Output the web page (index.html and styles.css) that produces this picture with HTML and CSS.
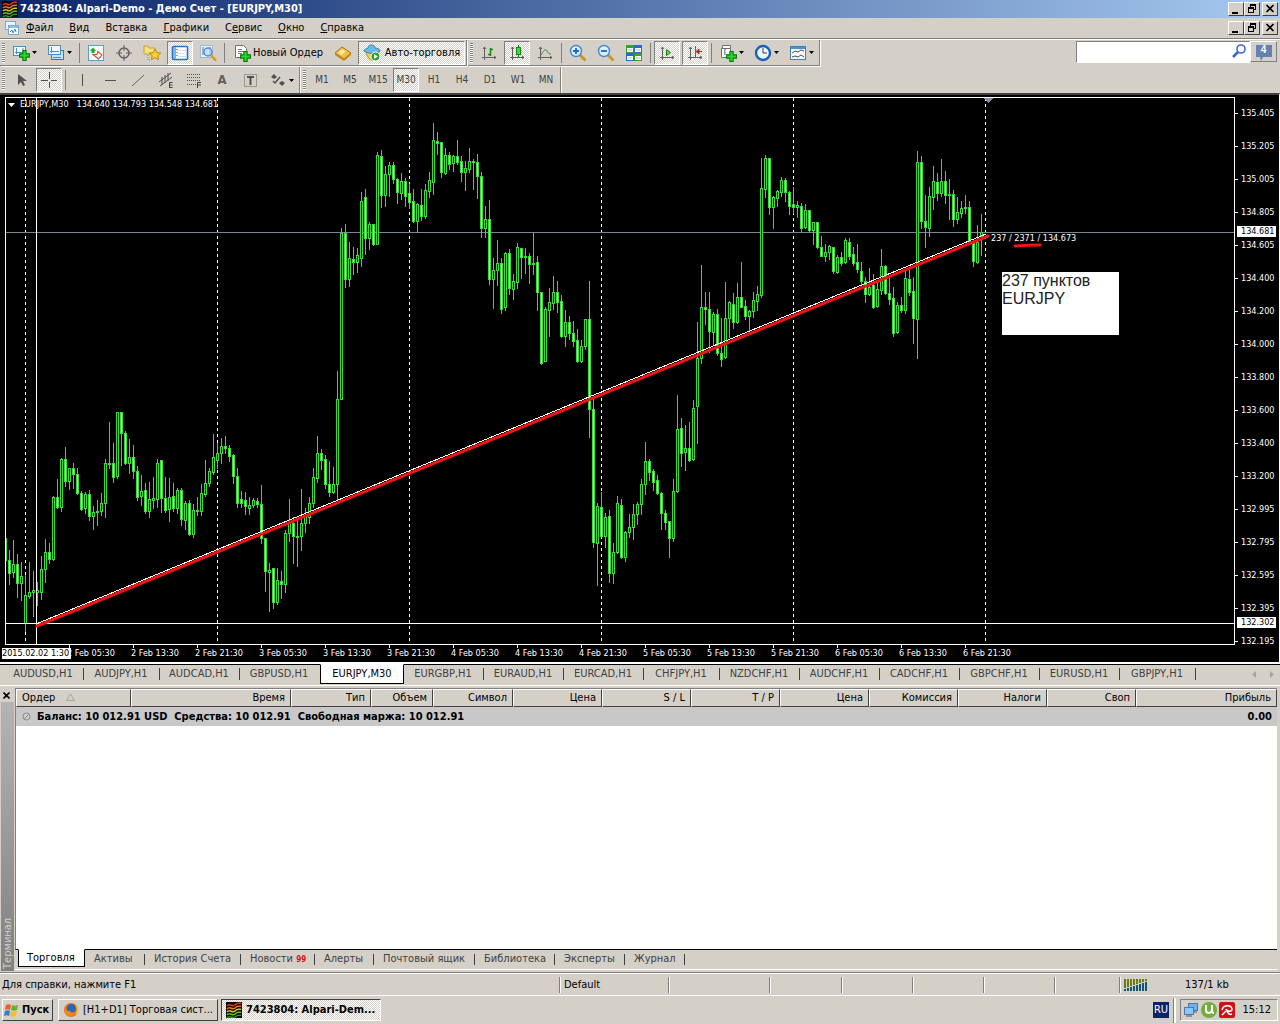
FILE: index.html
```html
<!DOCTYPE html>
<html lang="ru">
<head>
<meta charset="utf-8">
<title>7423804: Alpari-Demo - Демо Счет - [EURJPY,M30]</title>
<link rel="stylesheet" href="styles.css">
</head>
<body>
<svg class="sprite" aria-hidden="true">
  <symbol id="logo" viewBox="0 0 16 16"><rect width="16" height="16" fill="#100800"/><g fill="none" stroke-width="1.6"><path d="M1 4c3-4 5 2 8-1s4-1 6-2" stroke="#e03818"/><path d="M1 7c3-4 5 2 8-1s4-1 6-2" stroke="#e87828"/><path d="M1 10c3-4 5 2 8-1s4-1 6-2" stroke="#c8c830"/><path d="M1 13c3-4 5 2 8-1s4-1 6-2" stroke="#60c030"/><path d="M1 16c3-4 5 2 8-1s4-1 6-2" stroke="#309020"/></g></symbol>
  <symbol id="min" viewBox="0 0 12 10"><path d="M2 8h6v2H2z"/></symbol>
  <symbol id="restore" viewBox="0 0 12 10"><path d="M4 0h6v6H8v3H2V3h2zM5 2v1h3v2h1V2zM3 5v3h4V5z" fill-rule="evenodd"/></symbol>
  <symbol id="close" viewBox="0 0 12 10"><path d="M2.500 1l7 7M9.500 1l-7 7" stroke="#000" stroke-width="1.700"/></symbol>
  <symbol id="plus" viewBox="0 0 10 10"><path d="M3.500.5h3v3h3v3h-3v3h-3v-3h-3v-3h3z" fill="#28d828" stroke="#087808"/></symbol>
  <symbol id="down" viewBox="0 0 5 3"><path d="M0 0h5L2.500 3z"/></symbol>
  <symbol id="axes" viewBox="0 0 16 16"><path d="M3.500 2v13M1 12.500h14M2 4l1.500-2L5 4M13 11l2 1.500-2 1.500" fill="none" stroke="#606060"/></symbol>
</svg>

<header class="titlebar">
  <svg class="i16"><use href="#logo"/></svg>
  <h1>7423804: Alpari-Demo - Демо Счет - [EURJPY,M30]</h1>
  <div class="winbtns">
    <button aria-label="Свернуть"><svg><use href="#min"/></svg></button><button aria-label="Восстановить"><svg><use href="#restore"/></svg></button><button class="gap" aria-label="Закрыть"><svg><use href="#close"/></svg></button>
  </div>
</header>

<nav class="menubar">
  <svg class="i16" viewBox="0 0 16 16"><rect x="1.500" y="1.500" width="10" height="8" fill="#eaf4ff" stroke="#78a8d8"/><rect x="4.500" y="5.500" width="10" height="9" fill="#fff" stroke="#78a8d8"/><path d="M5 7h9" stroke="#90bce8" stroke-width="2"/><path d="M6 12l2-2 1 3 2-4 1 3" fill="none" stroke="#4888c8"/></svg>
  <button><u>Ф</u>айл</button><button><u>В</u>ид</button><button>Вст<u>а</u>вка</button><button><u>Г</u>рафики</button><button>С<u>е</u>рвис</button><button><u>О</u>кно</button><button><u>С</u>правка</button>
  <div class="winbtns">
    <button aria-label="Свернуть окно"><svg><use href="#min"/></svg></button><button aria-label="Восстановить окно"><svg><use href="#restore"/></svg></button><button class="gap" aria-label="Закрыть окно"><svg><use href="#close"/></svg></button>
  </div>
</nav>

<section class="toolbars">
  <div class="rows">
    <div class="row">
      <div class="bar">
        <i class="grip"></i>
        <button class="drop" aria-label="Новый график"><svg class="i18" viewBox="0 0 18 18"><rect x="1.500" y="2.500" width="12" height="9" fill="#eef8ff" stroke="#4890c8"/><path d="M4.500 4v6M3 8.500h9M11 4v5" stroke="#4890c8"/><use href="#plus" x="7" y="6" width="11" height="11"/></svg><svg class="arr"><use href="#down"/></svg></button>
        <button class="drop" aria-label="Профили"><svg class="i18" viewBox="0 0 18 18"><rect x="4.500" y="6.500" width="12" height="9" fill="#c8e0f8" stroke="#4078b0"/><rect x="1.500" y="1.500" width="12" height="9" fill="#eef8ff" stroke="#4890c8"/><path d="M4.500 3v6M3 7.500h9M6 13.500h8" stroke="#4890c8"/></svg><svg class="arr"><use href="#down"/></svg></button>
        <i class="sep"></i>
        <button aria-label="Обзор рынка"><svg class="i18" viewBox="0 0 18 18"><rect x="1.500" y="1.500" width="15" height="15" fill="#f4faff" stroke="#58a0d8"/><path d="M3 7l3-3.500L9 7H7.500v2h-3V7z" fill="#18b018"/><path d="M6 10.500h4l1-3 4 3.500-3.500 4z" fill="none" stroke="#e05030" stroke-width="1.200"/></svg></button>
        <button aria-label="Окно данных"><svg class="i18" viewBox="0 0 18 18"><circle cx="9" cy="9" r="5" fill="none" stroke="#606060" stroke-width="1.500"/><path d="M9 1v6M9 11v6M1 9h6M11 9h6" stroke="#606060"/></svg></button>
        <button aria-label="Избранное"><svg class="i18" viewBox="0 0 18 18"><path d="M1 2h4l1 2h6v6H1z" fill="#f8e080" stroke="#c8a030"/><path d="M5 11v5h3" stroke="#888" fill="none" stroke-dasharray="1 1"/><path d="M12 5l1.800 3.600 4 .5-3 2.600.8 4-3.600-2-3.600 2 .8-4-3-2.600 4-.5z" fill="#f8d030" stroke="#b88818"/></svg></button>
        <button class="on" aria-label="Терминал"><svg class="i18" viewBox="0 0 18 18"><rect x="1.500" y="2.500" width="15" height="13" rx="1" fill="#fff" stroke="#2870c8" stroke-width="1.600"/><path d="M2 3h3v12H2z" fill="#78b0f0"/><path d="M7 6.500h8M7 9.500h6M7 12.500h8" stroke="#d0dcf0"/><path d="M5.500 5.500h1M5.500 8.500h1M5.500 11.500h1" stroke="#303080"/></svg></button>
        <button aria-label="Тестер стратегий"><svg class="i18" viewBox="0 0 18 18"><rect x="1.500" y="1.500" width="12" height="12" fill="#e8f4ff" stroke="#98b8e0"/><path d="M4 3v8M11 3v8" stroke="#4070a0"/><circle cx="9" cy="8" r="4" fill="#b8d8f8" fill-opacity=".7" stroke="#5888c0" stroke-width="1.400"/><path d="M12 11.500l5 5" stroke="#d0a020" stroke-width="2.600"/></svg></button>
        <i class="sep"></i>
        <button class="text"><svg class="i18" viewBox="0 0 18 18"><path d="M2.500 1.500h8l3 3v9h-11z" fill="#fff" stroke="#707070"/><path d="M5 5.500h4M5 7.500h6M5 9.500h4" stroke="#808080"/><use href="#plus" x="7" y="7" width="11" height="11"/></svg>Новый Ордер</button>
        <button aria-label="MetaEditor"><svg class="i18" viewBox="0 0 18 18"><path d="M1 9l7-6 9 6-7 6z" fill="#f0c040" stroke="#a87018"/><path d="M1 9v2l9 6v-2zM17 9v2l-7 6v-2z" fill="#c88820"/><path d="M4 9l4-4 4 2-4 4z" fill="#fce898"/></svg></button>
        <button class="text on auto"><svg class="i18" viewBox="0 0 18 18"><path d="M1 7c3 0 3 9 8 9s7-5 7-9z" fill="#f0d050" stroke="#b09020"/><path d="M1 7c0-2 3-2 4-3 0-4 7-4 7 0 2 0 5 1 5 3-4 3-12 3-16 0z" fill="#68b8e8" stroke="#3880b0"/><circle cx="12.500" cy="12.500" r="4.500" fill="#20a828" stroke="#fff"/><path d="M11 10l4 2.500-4 2.500z" fill="#fff"/></svg>Авто-торговля</button>
      </div>
      <div class="bar">
        <i class="grip"></i>
        <button aria-label="Бары"><svg class="i16"><use href="#axes"/><path d="M9.500 3v8M9 4.500h3M7 9.500h2" stroke="#108810" stroke-width="1.500"/></svg></button>
        <button class="on" aria-label="Свечи"><svg class="i16"><use href="#axes"/><path d="M9.500 0v12" stroke="#108810"/><rect x="7.500" y="2.500" width="4" height="7" fill="#40d840" stroke="#108810"/></svg></button>
        <button aria-label="Линия"><svg class="i16"><use href="#axes"/><path d="M4 10c3-6 5-6 6-4s2 3 4 3" stroke="#388838" fill="none"/></svg></button>
        <i class="sep"></i>
        <button aria-label="Увеличить"><svg class="i18" viewBox="0 0 18 18"><path d="M11 11l5.500 5.500" stroke="#c89820" stroke-width="3"/><circle cx="7" cy="7" r="5.500" fill="#d8efff" stroke="#4088d0" stroke-width="1.400"/><path d="M4 7h6M7 4v6" stroke="#2068c0" stroke-width="1.800"/></svg></button>
        <button aria-label="Уменьшить"><svg class="i18" viewBox="0 0 18 18"><path d="M11 11l5.500 5.500" stroke="#c89820" stroke-width="3"/><circle cx="7" cy="7" r="5.500" fill="#d8efff" stroke="#4088d0" stroke-width="1.400"/><path d="M4 7h6" stroke="#2068c0" stroke-width="1.800"/></svg></button>
        <button aria-label="Окна плиткой"><svg class="i18" viewBox="0 0 18 18"><path d="M1 1h8v8H1zM9 9h8v8H9z" fill="#38a028"/><path d="M9 1h8v8H9zM1 9h8v8H1z" fill="#2868d0"/><path d="M2 4h6v4H2zM10 4h6v4h-6zM2 12h6v4H2zM10 12h6v4h-6z" fill="#fff"/><path d="M3 6h4M11 6h4M3 14h4M11 14h4" stroke="#a0c0d8"/></svg></button>
        <i class="sep"></i>
        <button class="on" aria-label="Автопрокрутка"><svg class="i16"><use href="#axes"/><path d="M7.500 4.500v6l4-3z" fill="#60d860" stroke="#108810"/></svg></button>
        <button class="on" aria-label="Сдвиг графика"><svg class="i16"><use href="#axes"/><path d="M8.500 1v11" stroke="#606060"/><path d="M15 6.500h-5M12 4l-3 2.500L12 9z" stroke="#b03020" fill="#b03020"/></svg></button>
        <i class="sep"></i>
        <button class="drop" aria-label="Индикаторы"><svg class="i18" viewBox="0 0 18 18"><path d="M3.500 4.500v-3h8v3M2.500 4.500h9v9h-9z" fill="#fff" stroke="#707070"/><path d="M7 5c-2 0-1 3-1 6" stroke="#505050" fill="none"/><use href="#plus" x="7" y="7" width="11" height="11"/></svg><svg class="arr"><use href="#down"/></svg></button>
        <button class="drop" aria-label="Периоды"><svg class="i18" viewBox="0 0 18 18"><circle cx="9" cy="9" r="7" fill="#e8f4ff" stroke="#1860b8" stroke-width="2.400"/><path d="M9 4v5h4" stroke="#404040" fill="none"/></svg><svg class="arr"><use href="#down"/></svg></button>
        <button class="drop" aria-label="Шаблоны"><svg class="i18" viewBox="0 0 18 18"><rect x="1.500" y="2.500" width="15" height="13" fill="#f4faff" stroke="#4080b8"/><path d="M2 4h14" stroke="#4890d8" stroke-width="2"/><path d="M3 9l3-2 3 1 3-2 3 1M3 13l3-1 3 1 3-2 3 2" stroke="#505050" fill="none"/></svg><svg class="arr"><use href="#down"/></svg></button>
      </div>
    </div>
    <div class="row">
      <div class="bar">
        <i class="grip"></i>
        <button aria-label="Курсор"><svg class="i16"><path d="M5 2v11l3-3 2 4 2-1-2-4h4z" fill="#505050"/></svg></button>
        <button class="on" aria-label="Перекрестие"><svg class="i16"><path d="M8.500 0v7M8.500 10v6M0 8.500h7M10 8.500h6" stroke="#505050"/></svg></button>
        <i class="sep"></i>
        <button aria-label="Вертикальная линия"><svg class="i16"><path d="M8.500 2v12" stroke="#505050"/></svg></button>
        <button aria-label="Горизонтальная линия"><svg class="i16"><path d="M3 8.500h11" stroke="#505050"/></svg></button>
        <button aria-label="Трендовая линия"><svg class="i16"><path d="M2 14L14 3" stroke="#606060"/></svg></button>
        <button aria-label="Канал"><svg class="i16"><path d="M1 10L13 1M2 14L14 5M4 5v8M7 3v8M10 1v8" stroke="#505050"/><path d="M14.500 10.500h-3v5h3M11.500 13h3" stroke="#404040" fill="none"/></svg></button>
        <button aria-label="Фибоначчи"><svg class="i16"><path d="M1 2.500h14M1 5.500h14M1 8.500h14M1 12.500h9" stroke="#505050" stroke-dasharray="1 1"/><path d="M15 10.500h-3.500V16M12 13h3" stroke="#404040" fill="none"/></svg></button>
        <button class="letter">A</button>
        <button aria-label="Текстовая метка"><svg class="i16"><rect x="2.500" y="2.500" width="12" height="12" fill="none" stroke="#606060" stroke-dasharray="1 1"/><path d="M5 5h7M8.500 5v8" stroke="#505050" stroke-width="2"/></svg></button>
        <button class="drop" aria-label="Стрелки"><svg class="i18" viewBox="0 0 18 18"><path d="M2 6l3-3 3 3-3 2zM10 12l3-2 3 2-3 3z" fill="#505050"/><path d="M4 10l2 2 5-6" stroke="#505050" fill="none" stroke-width="1.500"/></svg><svg class="arr"><use href="#down"/></svg></button>
      </div>
      <div class="bar periods">
        <i class="grip"></i>
        <button>M1</button><button>M5</button><button>M15</button><button class="on">M30</button><button>H1</button><button>H4</button><button>D1</button><button>W1</button><button>MN</button>
      </div>
    </div>
  </div>
  <div class="search">
    <input type="search" aria-label="Поиск">
    <svg class="lens" viewBox="0 0 14 14"><circle cx="9" cy="5" r="4" fill="none" stroke="#3868c8" stroke-width="1.600"/><path d="M6 8l-5 5" stroke="#3868c8" stroke-width="2.600"/></svg>
    <button class="chat"><svg class="bubble" viewBox="0 0 16 16"><path d="M0 0h16v12H7l-2 4-1-4H0z" fill="#6480b4"/></svg><span>4</span></button>
  </div>
</section>

<main class="chart">
  <div class="plot">
    <svg id="plot" class="canvas" shape-rendering="crispEdges" role="img" aria-label="EURJPY M30"></svg>
    <p class="ohlc"><svg class="tri" viewBox="0 0 7 4"><path d="M0 0h7L3.500 4z" fill="#fff"/></svg><span>EURJPY,M30</span><span>134.640 134.793 134.548 134.681</span></p>
    <p class="measure">237 / 2371 / 134.673</p>
    <p class="note">237 пунктов<br>EURJPY</p>
  </div>
  <ol class="prices">
    <li>135.405</li><li>135.205</li><li>135.005</li><li>134.805</li><li>134.605</li><li>134.400</li><li>134.200</li><li>134.000</li><li>133.800</li><li>133.600</li><li>133.400</li><li>133.200</li><li>132.995</li><li>132.795</li><li>132.595</li><li>132.395</li><li>132.195</li>
    <li class="mark bid">134.681</li><li class="mark cursor">132.302</li>
  </ol>
  <ol class="times">
    <li>2 Feb 05:30</li><li>2 Feb 13:30</li><li>2 Feb 21:30</li><li>3 Feb 05:30</li><li>3 Feb 13:30</li><li>3 Feb 21:30</li><li>4 Feb 05:30</li><li>4 Feb 13:30</li><li>4 Feb 21:30</li><li>5 Feb 05:30</li><li>5 Feb 13:30</li><li>5 Feb 21:30</li><li>6 Feb 05:30</li><li>6 Feb 13:30</li><li>6 Feb 21:30</li>
    <li class="mark now">2015.02.02 1:30</li>
  </ol>
</main>

<nav class="charttabs">
  <button>AUDUSD,H1</button><button class="narrow">AUDJPY,H1</button><button>AUDCAD,H1</button><button class="last">GBPUSD,H1</button><button class="active">EURJPY,M30</button><button>EURGBP,H1</button><button>EURAUD,H1</button><button>EURCAD,H1</button><button class="narrow">CHFJPY,H1</button><button>NZDCHF,H1</button><button>AUDCHF,H1</button><button>CADCHF,H1</button><button>GBPCHF,H1</button><button>EURUSD,H1</button><button class="narrow">GBPJPY,H1</button>
  <svg class="scroll" viewBox="0 0 22 7"><path d="M4 0v7L0 3.500zM18 0v7l4-3.500z" fill="#a8a49c"/></svg>
</nav>

<section class="terminal">
  <aside class="side"><button aria-label="Закрыть терминал"><svg viewBox="0 0 7 7"><path d="M.5.5l6 6M6.500.5l-6 6" stroke="#000" stroke-width="1.600"/></svg></button><span>Терминал</span></aside>
  <div class="pane">
    <div class="sheet">
      <table>
        <colgroup><col class="c-order"><col class="c-time"><col class="c-type"><col class="c-vol"><col class="c-type"><col class="c-num"><col class="c-num"><col class="c-num"><col class="c-num"><col class="c-num"><col class="c-num"><col class="c-num"><col></colgroup>
        <thead><tr><th>Ордер <svg class="sort" viewBox="0 0 9 8"><path d="M4.500 1L.5 7.500h8z" fill="none" stroke="#a8a49c"/></svg></th><th>Время</th><th>Тип</th><th>Объем</th><th>Символ</th><th>Цена</th><th>S / L</th><th>T / P</th><th>Цена</th><th>Комиссия</th><th>Налоги</th><th>Своп</th><th>Прибыль</th></tr></thead>
        <tbody><tr><td colspan="12"><svg class="dot" viewBox="0 0 9 9"><circle cx="4.500" cy="4.500" r="3.500" fill="#ccc" stroke="#888"/><path d="M2.500 6.500l4-4" stroke="#888"/></svg>Баланс: 10 012.91 USD&nbsp; Средства: 10 012.91&nbsp; Свободная маржа: 10 012.91</td><td>0.00</td></tr></tbody>
      </table>
    </div>
    <nav class="termtabs"><button class="active">Торговля</button><button>Активы</button><button>История Счета</button><button>Новости <b>99</b></button><button>Алерты</button><button>Почтовый ящик</button><button>Библиотека</button><button>Эксперты</button><button>Журнал</button></nav>
  </div>
</section>

<footer class="status">
  <span>Для справки, нажмите F1</span><span>Default</span><span></span><span></span><span></span><span></span><span></span><span></span>
  <span><svg class="signal" viewBox="0 0 24 12" shape-rendering="crispEdges"><path d="M0 0h2v9H0zM3 0h2v8H3zM6 0h2v7H6zM9 0h2v6H9zM12 0h2v5h-2zM15 0h2v4h-2zM18 0h2v3h-2zM21 0h2v2h-2z" fill="#6c7c10"/><path d="M0 10h2v2H0zM3 9h2v3H3zM6 8h2v4H6zM9 7h2v5H9zM12 6h2v6h-2zM15 5h2v7h-2zM18 4h2v8h-2zM21 3h2v9h-2z" fill="#105878"/></svg></span><span class="kb">137/1 kb</span>
</footer>

<footer class="taskbar">
  <button class="start"><svg class="i16" viewBox="0 0 16 16"><path d="M2 3c2-1 3-1 5 0L6 8C4 7 3 7 1 8z" fill="#e86028"/><path d="M8 3c2 1 3 1 6 0l-1 5c-2 1-4 1-6 0z" fill="#68b030"/><path d="M1 9c2-1 3-1 5 0l-1 5c-2-1-3-1-5 0z" fill="#3878d8"/><path d="M7 9c2 1 4 1 6 0l-1 5c-2 1-4 1-6 0z" fill="#f0c028"/></svg>Пуск</button>
  <button class="task"><svg class="i16" viewBox="0 0 16 16"><circle cx="8" cy="8" r="7" fill="#e87018"/><circle cx="8.500" cy="6.500" r="4.500" fill="#2868b8"/><path d="M1 5c1 4 3 4 6 4 1 2 4 2 6 0-1 4-4 5-6 5s-6-2-6-9z" fill="#f08820"/><path d="M13 3c2 3 2 6 0 9" stroke="#f8c030" fill="none" stroke-width="1.500"/></svg><span>[H1+D1] Торговая сист...</span></button>
  <button class="task current"><svg class="i16"><use href="#logo"/></svg><span>7423804: Alpari-Dem...</span></button>
  <span class="lang">RU</span>
  <div class="tray">
    <svg class="i16" viewBox="0 0 16 16"><rect x="5.500" y="1.500" width="9" height="7" fill="#70b0f0" stroke="#5078a8"/><rect x="1.500" y="5.500" width="9" height="7" fill="#88c8ff" stroke="#5078a8"/><path d="M3 14h6M10 10h4" stroke="#708090" stroke-width="1.500"/></svg>
    <svg class="i16" viewBox="0 0 16 16"><circle cx="8" cy="8" r="8" fill="#70b038"/><path d="M5 3v5c0 4 5 4 6 0V3M11 8c0 3 1 3 2 3" fill="none" stroke="#fff" stroke-width="2"/></svg>
    <svg class="i16" viewBox="0 0 16 16"><rect width="16" height="16" rx="2" fill="#d01018"/><path d="M3 8c1-5 9-6 10-1 0 3-5 3-6 0M8 9c1 3 3 4 5 3M3 13l4-4" fill="none" stroke="#fff" stroke-width="1.500"/></svg>
    <time>15:12</time>
  </div>
</footer>
<script src="chart.js"></script>
</body>
</html>
```
FILE: styles.css
```css
:root {
  --face: #d4d0c8;
  --shade: #808080;
  --dark: #404040;
  --ui: "DejaVu Sans Condensed", "DejaVu Sans", "Noto Sans", sans-serif;
}
* { box-sizing: border-box; }
body {
  margin: 0;
  min-height: 100vh;
  display: flex;
  flex-direction: column;
  background: var(--face);
  color: #000;
  font: 11px/14px var(--ui);
}
button, input { font: inherit; color: inherit; margin: 0; padding: 0; border: 0; border-radius: 0; background: none; }
svg { display: block; flex: none; }
p, ol, h1 { margin: 0; padding: 0; }
ol { list-style: none; }
.sprite { position: absolute; width: 0; height: 0; }
.i16 { width: 16px; height: 16px; }
.i18 { width: 18px; height: 18px; }

.titlebar {
  display: flex; align-items: center; height: 18px; padding: 0 2px;
  background: linear-gradient(90deg, #0a246a, #a6caf0);
}
.titlebar h1 { flex: 1; padding-left: 2px; color: #fff; font: bold 11px/16px var(--ui); }
.winbtns { display: flex; margin-left: auto; }
.winbtns button {
  width: 16px; height: 14px; padding: 1px; background: var(--face);
  border: 1px solid; border-color: #fff var(--dark) var(--dark) #fff;
}
.winbtns .gap { margin-left: 2px; }
.winbtns svg { width: 12px; height: 10px; }

.menubar {
  display: flex; align-items: center; height: 21px; padding: 0 2px 0 4px;
  border-bottom: 1px solid var(--shade);
}
.menubar > button { padding: 0 8px; }
.menubar > .i16 + button { padding-left: 6px; }

.toolbars { display: flex; justify-content: space-between; height: 54px; border-top: 1px solid #fff; }
.row { display: flex; height: 27px; }
.bar {
  display: flex; align-items: center; height: 26px;
  border-right: 1px solid var(--shade); border-bottom: 1px solid var(--shade);
  box-shadow: 1px 1px 0 #fff; margin-right: 1px;
}
.row + .row .bar { border-bottom: 0; box-shadow: 1px 0 0 #fff; }
.grip {
  width: 3px; height: 20px; margin: 0 2px;
  background: repeating-linear-gradient(#808080 0 1px, #fff 1px 2px);
}
.sep { width: 1px; height: 20px; margin: 0 2px; background: var(--shade); }
.bar button {
  width: 26px; height: 24px; margin: 0 1px; display: flex; align-items: center; justify-content: center;
  border: 1px solid transparent;
}
.bar .drop { width: 33px; gap: 2px; }
.arr { width: 5px; height: 3px; }
.bar .text { width: auto; padding: 0 4px; gap: 2px; }
.bar .auto { width: 107px; padding: 0 2px; gap: 4px; }
.bar .on {
  border-color: var(--shade) #fff #fff var(--shade);
  background: repeating-conic-gradient(#fff 0 25%, var(--face) 0 50%) 0 0 / 2px 2px;
}
.bar .letter { font: bold 13px/16px var(--ui); color: #606060; }
.periods button { font-size: 10px; color: #404040; }

.search { display: flex; position: relative; height: 22px; margin: 1px 3px 0 0; width: 201px; }
.search input {
  flex: 1; min-width: 0; padding: 0 30px 0 4px; background: #fff; appearance: none;
  border: 1px solid; border-color: var(--shade) #fff #fff var(--shade); outline: 0;
}
.lens { position: absolute; right: 31px; top: 3px; width: 14px; height: 14px; }
.chat {
  display: grid; place-items: center; width: 27px; height: 21px; padding-top: 2px;
  border: 1px solid; border-color: #fff var(--shade) var(--shade) #fff;
  color: #fff; font: bold 10px/12px "Liberation Sans", sans-serif;
}
.bubble, .chat span { grid-area: 1 / 1; }
.bubble { width: 16px; height: 16px; }
.chat span { align-self: start; }

.chart {
  position: relative;
  display: grid; grid-template: 548px 17px / 1fr 44px;
  padding: 2px 0 0 5px;
  border-top: 2px solid var(--dark); border-right: 1px solid #fff; border-bottom: 2px solid #fff;
  background: #000; color: #fff;
  font: 9px/11px var(--ui);
}
.plot { position: relative; overflow: hidden; border: 1px solid #fff; }
.canvas { position: absolute; inset: 0; width: 100%; height: 100%; }
.ohlc { position: absolute; left: 2px; top: 1px; display: flex; align-items: center; gap: 5px; white-space: nowrap; }
.ohlc span + span { padding-left: 3px; }
.tri { width: 7px; height: 4px; }
.measure { position: absolute; left: 985px; top: 135px; white-space: nowrap; }
.note {
  position: absolute; left: 996px; top: 174px; width: 117px; height: 63px;
  background: #fff; color: #222; font: 16px/18px "Liberation Sans", Arial, sans-serif;
}
.prices { position: relative; grid-row: 1 / 3; grid-column: 2; }
.prices li { display: flex; align-items: center; height: 33px; gap: 3px; }
.prices li:not(.mark)::before { content: ""; width: 3px; height: 1px; background: #fff; }
.times { position: relative; display: flex; overflow: hidden; margin-left: -5px; padding-left: 67px; }
.times li { flex: 0 0 64px; white-space: nowrap; }
.times li::before { content: ""; display: block; width: 1px; height: 3px; margin-left: 2px; background: #fff; }
.prices .mark, .times .mark { position: absolute; height: 11px; background: #fff; color: #000; }
.times .mark::before { display: none; }
.prices .mark { left: 2px; width: 39px; padding-left: 4px; }
.prices .bid { top: 129px; }
.prices .cursor { top: 520px; }
.times .now { left: 2px; top: 3px; width: 69px; }

.charttabs { display: flex; height: 22px; padding-left: 4px; border-top: 1px solid #000; border-bottom: 1px solid #fff; }
.charttabs button { width: 80px; height: 18px; padding-right: 2px; color: #404040; white-space: nowrap; }
.charttabs .narrow { width: 76px; }
.charttabs button:not(.active):not(.last) { background: linear-gradient(#404040, #404040) right center / 1px 12px no-repeat; }
.charttabs .active { width: 84px; height: 20px; margin-top: -1px; padding: 0; background: #fff; color: #000; border: 1px solid #000; border-top-color: #fff; }
.scroll { width: 22px; height: 7px; margin: 6px 6px 0 auto; }

.terminal { flex: 1; display: flex; min-height: 200px; padding-top: 2px; border-bottom: 1px solid var(--shade); }
.side { width: 15px; display: flex; flex-direction: column; }
.side button { width: 13px; height: 14px; padding: 3px; }
.side button svg { width: 7px; height: 7px; }
.side span {
  flex: 1; width: 13px; margin: 0 0 1px 1px; padding-top: 2px;
  background: linear-gradient(#808080, #b4b4b4); color: var(--face);
  writing-mode: vertical-rl; transform: rotate(180deg); line-height: 13px;
}
.pane { flex: 1; min-width: 0; display: flex; flex-direction: column; padding: 0 3px 2px 0; }
.sheet { flex: 1; background: #fff; border-bottom: 1px solid #000; border-top: 1px solid var(--shade); border-left: 1px solid var(--shade); }
table { width: 100%; table-layout: fixed; border-collapse: separate; border-spacing: 0; }
.c-order { width: 115px; }
.c-time { width: 160px; }
.c-type { width: 80px; }
.c-vol { width: 62px; }
.c-num { width: 89px; }
th {
  height: 18px; padding: 0 5px; background: var(--face); font-weight: normal; text-align: right;
  border: 1px solid; border-color: #fff var(--dark) var(--dark) #fff; line-height: 14px;
}
th:first-child { text-align: left; }
.sort { display: inline-block; width: 9px; height: 8px; margin-left: 8px; }
td { height: 19px; padding: 0 5px 0 6px; background: #c8c8c8; font-weight: bold; text-align: right; white-space: nowrap; }
td:first-child { text-align: left; }
.dot { display: inline-block; width: 9px; height: 9px; margin-right: 6px; vertical-align: -1px; }
.termtabs { display: grid; grid-template-columns: 67px 60px 96px 74px 59px 101px 80px 70px 60px; height: 20px; padding-left: 3px; border-bottom: 1px solid #fff; }
.termtabs button { height: 18px; color: #404040; text-align: left; padding-left: 9px; white-space: nowrap; background: linear-gradient(#404040, #404040) right center / 1px 11px no-repeat; }
.termtabs .active { margin-top: -1px; color: #000; background: #fff; border: 1px solid #000; border-top-color: #fff; padding-left: 8px; }
.termtabs b { color: #e01010; font-size: 8px; }

.status {
  display: grid; grid-template-columns: 1fr 109px 101px 72px 71px 71px 71px 65px 66px 95px;
  height: 23px; padding: 3px 0 2px; border-top: 1px solid #fff; border-bottom: 1px solid #fff;
}
.status span { padding: 1px 5px 0 4px; border-left: 1px solid var(--shade); box-shadow: inset 1px 0 0 #fff; }
.status span:first-child { padding-left: 2px; border: 0; box-shadow: none; }
.status .kb { padding-left: 0; border: 0; box-shadow: none; }
.signal { width: 24px; height: 12px; margin-top: 1px; }

.taskbar { display: flex; align-items: center; height: 28px; padding: 0 2px; }
.taskbar button {
  display: flex; align-items: center; height: 22px; padding: 0 4px; white-space: nowrap;
  border: 1px solid; border-color: #fff var(--dark) var(--dark) #fff;
}
.start { width: 51px; gap: 2px; font-weight: bold; }
.taskbar .start { padding: 0 1px; }
.task { width: 160px; gap: 4px; margin-left: 3px; }
.start + .task { margin-left: 5px; }
.taskbar .current {
  font-weight: bold; border-color: var(--dark) #fff #fff var(--dark);
  background: repeating-conic-gradient(#fff 0 25%, var(--face) 0 50%) 0 0 / 2px 2px;
}
.lang { margin-left: auto; width: 16px; line-height: 16px; text-align: center; background: #0a246a; color: #fff; }
.tray {
  display: flex; align-items: center; gap: 2px; width: 98px; height: 22px; margin-left: 11px; padding: 0 2px; position: relative;
  border: 1px solid; border-color: var(--shade) #fff #fff var(--shade);
}
.tray::before { content: ""; position: absolute; left: -8px; top: -2px; width: 2px; height: 25px; border-left: 1px solid var(--shade); background: #fff; }
.tray time { margin-left: auto; padding-right: 4px; }
```
FILE: chart.js
```js
// Candle rows: high, body top, body bottom, low (screen rows), u = rising, d = falling.
const CANDLES = `531,538,560,567,d 550,560,573,584,d 540,564,572,577,u 554,564,583,597,d 562,576,583,600,u
575,595,623,631,u 562,592,596,598,u 571,590,592,616,u 582,590,592,605,u 556,569,592,599,u
539,552,569,582,u 543,552,559,563,d 496,497,559,560,u 479,497,507,508,d 458,459,507,511,u
447,459,481,486,d 468,468,481,489,u 463,468,474,488,d 468,474,493,494,d 491,493,509,510,d
492,494,508,513,u 490,494,516,520,d 506,512,516,529,u 500,511,512,525,u 493,503,511,515,u
459,463,503,517,u 422,463,464,468,u 443,463,477,482,d 412,412,476,478,u 412,412,433,465,d
431,433,463,464,d 439,457,463,473,u 445,457,471,478,d 466,471,497,500,d 475,491,496,505,u
483,490,511,513,d 482,499,511,517,u 477,498,500,508,u 459,463,499,507,u 460,460,498,512,d
477,498,510,512,d 478,497,509,521,u 483,496,508,511,d 488,490,508,513,u 488,490,519,525,d
501,503,520,529,u 500,503,534,535,d 504,510,534,537,u 497,510,511,515,u 484,493,511,515,u
460,483,494,496,u 468,471,483,486,u 434,457,472,474,u 443,453,460,468,u 438,446,453,463,u
436,446,448,453,d 445,448,456,461,d 454,455,476,483,d 468,476,503,507,d 491,499,503,507,d
492,500,506,514,d 497,505,508,514,u 498,500,505,507,u 498,501,504,507,d 485,504,538,543,d
538,538,571,591,d 563,570,572,611,u 568,568,602,608,d 568,580,602,604,u 571,581,584,598,d
530,533,584,592,u 499,523,533,541,u 517,523,536,563,d 518,536,537,566,u 489,523,536,550,u
508,515,523,532,u 497,503,517,523,u 468,477,503,507,u 436,453,478,482,u 449,453,460,469,d
455,459,484,488,d 461,484,492,496,d 467,484,492,493,u 371,399,484,499,u 228,233,399,399,u
224,233,279,287,d 242,258,279,286,u 247,259,262,274,d 248,255,262,272,u 192,201,258,266,u
189,197,238,254,d 222,224,238,249,u 224,224,244,245,d 152,155,244,244,u 150,156,195,207,d
166,174,195,206,u 162,165,174,196,u 162,165,179,183,d 178,179,192,203,d 173,181,193,199,u
178,181,196,206,d 184,193,202,208,d 189,201,221,222,d 203,204,221,232,u 189,205,216,220,d
184,190,216,218,u 172,180,191,197,u 123,140,182,194,u 132,141,143,154,d 142,142,172,177,d
148,155,173,174,u 152,155,164,169,d 155,156,163,171,u 140,156,162,164,d 156,161,172,181,d
161,168,172,190,u 148,161,169,172,u 159,161,162,189,d 154,162,176,198,d 172,176,228,237,d
206,219,228,237,u 200,219,279,284,d 258,270,279,308,u 240,263,270,285,u 258,263,309,313,d
252,253,307,310,u 249,253,288,294,d 274,281,289,299,u 243,247,282,288,u 248,248,257,278,d
248,256,257,273,u 253,256,264,283,d 232,263,264,274,u 256,262,292,310,d 292,292,363,364,d
307,309,361,361,u 288,302,310,336,u 276,292,303,309,u 281,292,302,312,d 295,301,336,337,d
310,322,336,346,u 316,322,333,339,d 321,333,341,346,d 329,340,361,362,d 340,346,361,362,u
319,319,346,349,u 281,319,409,437,d 398,409,542,547,d 503,506,543,585,u 492,507,536,536,d
513,517,536,547,u 510,516,573,582,d 543,552,573,583,u 496,503,552,553,u 499,505,557,558,d
531,532,557,561,u 514,527,532,537,u 504,514,527,539,u 502,504,514,524,u 479,484,504,514,u
442,461,484,494,u 459,461,472,480,d 469,471,482,490,d 475,480,493,494,d 492,493,513,529,d
510,513,522,529,d 521,521,538,557,d 479,491,538,541,u 395,429,491,492,u 418,428,453,466,d
425,448,452,470,u 422,448,460,461,d 400,408,459,460,u 322,358,406,443,u 265,307,358,363,u
292,307,309,324,d 292,309,331,352,d 312,314,332,344,u 309,314,353,355,d 318,353,359,366,d
282,318,357,358,u 301,302,318,337,u 293,304,322,328,d 283,297,322,323,u 262,297,307,307,d
300,306,316,319,d 310,311,316,330,u 292,300,311,317,u 286,294,301,310,u 158,188,295,297,u
155,158,189,197,u 158,158,207,214,d 196,197,207,228,u 190,191,198,206,u 177,180,192,196,u
178,180,192,201,d 191,192,206,214,d 187,204,207,213,d 201,205,207,217,u 203,206,228,231,d
204,210,227,228,u 210,210,230,231,d 222,222,230,244,u 222,222,247,248,d 236,247,256,256,d
244,252,256,261,u 245,246,252,259,u 247,247,271,273,d 255,257,272,273,u 252,257,263,265,d
238,240,262,263,u 238,242,256,259,d 247,254,263,265,d 244,262,269,272,d 262,271,281,284,d
277,281,294,302,d 268,287,294,295,u 274,285,307,308,d 281,289,306,307,u 249,266,290,294,u
265,266,293,294,d 278,293,299,304,d 287,298,333,336,d 302,305,332,333,u 297,305,310,312,d
271,278,310,313,u 270,279,292,295,d 277,291,318,343,d 151,162,319,358,u 156,162,221,228,d
195,221,227,247,d 187,196,228,236,u 166,181,197,209,u 173,182,193,200,d 159,181,193,196,u
171,181,195,203,d 179,194,195,219,d 190,194,219,226,d 197,212,219,223,u 201,208,213,217,u
195,207,208,213,u 201,207,241,242,d 240,243,261,266,d 225,242,262,263,u 214,232,236,255,u`;

const STEP = 4;
const TOP = 98;
const LEFT = 6;
const GREEN = '#32e032';
const svg = document.getElementById('plot');

function add(name, attrs) {
  const el = document.createElementNS('http://www.w3.org/2000/svg', name);
  for (const key in attrs) el.setAttribute(key, attrs[key]);
  svg.appendChild(el);
}
function box(x, y, width, height, fill) {
  add('rect', { x, y, width, height, fill });
}

// Day separators
for (let x = 19; x < 1000; x += 192) {
  add('line', { x1: x + 0.5, x2: x + 0.5, y1: 0, y2: '100%', stroke: '#fff', 'stroke-dasharray': '3 3' });
}
// Bid line
add('rect', { x: 0, y: 134, width: '100%', height: 1, fill: '#778890' });

CANDLES.split(/\s+/).forEach((row, i) => {
  const [high, top, bottom, low, dir] = row.split(',');
  const x = i * STEP + 5 - LEFT;
  const bodyHeight = bottom - top + 1;
  box(x, high - TOP, 1, low - high + 1, GREEN);
  box(x - 1, top - TOP, 3, bodyHeight, GREEN);
  if (bodyHeight > 2) box(x, top - TOP + 1, 1, bodyHeight - 2, dir === 'u' ? '#000' : '#b8ffb8');
});

// Crosshair
add('rect', { x: 0, y: 525, width: '100%', height: 1, fill: '#fff' });
add('rect', { x: 30, y: 0, width: 1, height: '100%', fill: '#fff' });

// Measured move
add('path', { d: 'M31 528L982 138', stroke: '#f01414', 'stroke-width': 3, 'stroke-linecap': 'round', 'shape-rendering': 'auto' });
add('path', { d: 'M30 526L980 136', stroke: '#fff', 'stroke-width': 1 });
add('path', { d: 'M1009 148q12-1 25-1', stroke: '#f01414', 'stroke-width': 3, 'stroke-linecap': 'round', fill: 'none', 'shape-rendering': 'auto' });
// Chart shift handle
add('path', { d: 'M977 0h10l-5 5z', fill: '#8090a0' });
```
